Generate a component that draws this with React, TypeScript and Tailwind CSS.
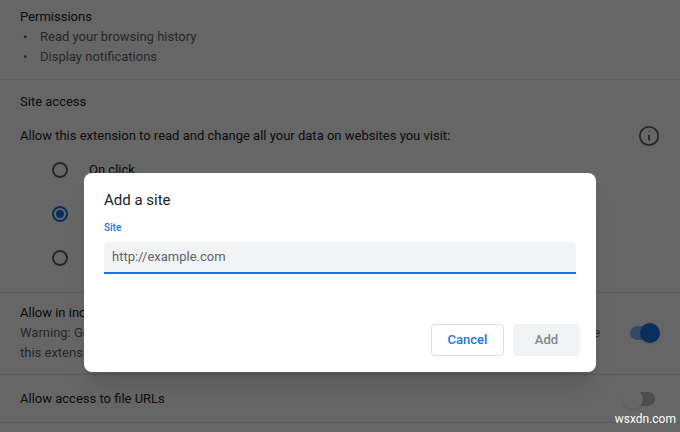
import React from 'react'

const Radio = ({ checked, label }: { checked?: boolean; label: string }) => (
    <div className="flex items-center h-[44px] pl-[52px]">
        <span className={`w-[16px] h-[16px] rounded-full border-2 flex items-center justify-center ${checked ? 'border-[#1a73e8]' : 'border-[#5f6368]'}`}>
            {checked && <span className="w-[8px] h-[8px] rounded-full bg-[#1a73e8]" />}
        </span>
        <span className="ml-[21px]">{label}</span>
    </div>
)

const Toggle = ({ on }: { on?: boolean }) => (
    <div className="relative w-[28px] h-[14px]">
        <div className={`absolute inset-0 rounded-full ${on ? 'bg-[#8ab4f8]' : 'bg-[#bdc1c6]'}`} />
        <div className={`absolute top-[-3px] w-[20px] h-[20px] rounded-full shadow ${on ? 'right-[-2px] bg-[#1a73e8]' : 'left-[-4px] bg-white'}`} />
    </div>
)

export default function App() {
    return (
        <div className="relative w-[680px] h-[432px] overflow-hidden bg-white text-[13px] text-[#202124]" style={{ fontFamily: 'Roboto, "Liberation Sans", sans-serif' }}>
            <div className="px-[20px] pt-[7px] pb-[12px] border-b border-[#e0e0e0]">
                <div className="leading-[20px]">Permissions</div>
                <ul className="text-[#5f6368] leading-[20px]">
                    <li className="flex"><span className="w-[20px] pl-[3px]">•</span>Read your browsing history</li>
                    <li className="flex"><span className="w-[20px] pl-[3px]">•</span>Display notifications</li>
                </ul>
            </div>
            <div className="border-b border-[#e0e0e0] pb-[12px]">
                <div className="px-[20px] pt-[12px] leading-[20px]">Site access</div>
                <div className="flex items-center justify-between pl-[20px] pr-[20px] mt-[14px] h-[20px]">
                    <span>Allow this extension to read and change all your data on websites you visit:</span>
                    <svg width="22" height="22" viewBox="0 0 24 24" fill="none" stroke="#5f6368" strokeWidth="2"><circle cx="12" cy="12" r="10" /><path d="M12 11v6M12 7v.5" /></svg>
                </div>
                <div className="mt-[2px]">
                    <Radio label="On click" />
                    <Radio checked label="On specific sites" />
                    <Radio label="On all sites" />
                </div>
            </div>
            <div className="flex items-center justify-between pl-[20px] pr-[20px] pt-[10px] pb-[11px] border-b border-[#e0e0e0]">
                <div className="leading-[20px] w-[590px]">
                    <div>Allow in incognito</div>
                    <div className="text-[#5f6368]">Warning: Google Chrome cannot prevent extensions from recording your browsing history. To disable this extension in incognito mode, unselect this option.</div>
                </div>
                <div className="mr-[2px]"><Toggle on /></div>
            </div>
            <div className="flex items-center justify-between px-[20px] h-[48px] border-b border-[#e0e0e0]">
                <span>Allow access to file URLs</span>
                <div className="mr-[5px]"><Toggle /></div>
            </div>

            <div className="absolute inset-0 bg-black/60" />
            <div className="absolute right-[4px] bottom-[4px] text-white text-[12px]">wsxdn.com</div>

            <div className="absolute left-[84px] top-[173px] w-[512px] h-[199px] bg-white rounded-[8px] shadow-xl px-[20px] pt-[17px]">
                <div className="text-[15px] leading-[20px]">Add a site</div>
                <div className="mt-[12px] text-[10px] font-medium text-[#1a73e8] leading-[12px]">Site</div>
                <div className="mt-[8px] h-[32px] bg-[#f1f3f4] rounded-t-[4px] border-b-2 border-[#1a73e8] flex items-center px-[8px] text-[13px] text-[#5f6368]">http://example.com</div>
                <div className="flex justify-end gap-[9px] mt-[50px] -mr-[4px]">
                    <div className="w-[73px] h-[32px] rounded-[4px] border border-[#dadce0] text-[#1a73e8] font-medium flex items-center justify-center">Cancel</div>
                    <div className="w-[67px] h-[32px] rounded-[4px] bg-[#f1f3f4] text-[#80868b] font-medium flex items-center justify-center">Add</div>
                </div>
            </div>
        </div>
    )
}
